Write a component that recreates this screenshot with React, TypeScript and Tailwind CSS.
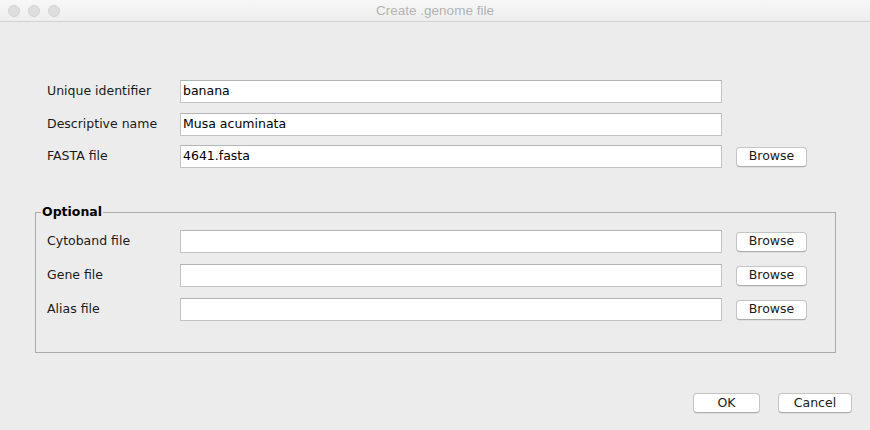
import React from "react";

const font = "font-['DejaVu_Sans',_'Noto_Sans',_sans-serif]";

function Field({ value = "" }: { value?: string }) {
  return (
    <div className="h-[23px] w-[542px] bg-white border border-[#c3c3c3] border-t-[#b4b4b4] flex items-center pl-[2px] text-[12.5px] text-black leading-none">
      {value}
    </div>
  );
}

function Btn({ label, w }: { label: string; w: string }) {
  return (
    <div
      className={`${w} h-[20px] bg-white border border-[#c4c4c4] border-b-[#acacac] rounded-[4px] shadow-[0_0.5px_0.5px_rgba(0,0,0,0.12)] flex items-center justify-center text-[12.5px] text-[#1a1a1a] leading-none`}
    >
      {label}
    </div>
  );
}

function Row({ label, value, browse }: { label: string; value?: string; browse?: boolean }) {
  return (
    <div className="flex items-center h-[23px]">
      <div className="w-[133px] text-[12.5px] text-[#1a1a1a] leading-none">{label}</div>
      <Field value={value} />
      {browse && (
        <div className="ml-[14px]">
          <Btn label="Browse" w="w-[71px]" />
        </div>
      )}
    </div>
  );
}

export default function App() {
  return (
    <div className={`w-[870px] h-[430px] bg-[#ececec] flex flex-col ${font} overflow-hidden`}>
      {/* title bar */}
      <div className="h-[22px] shrink-0 bg-gradient-to-b from-[#f7f7f7] to-[#eeeeee] border-b border-[#d2d2d2] flex items-center">
        <div className="flex items-center gap-[8px] pl-[8px]">
          <div className="w-[12px] h-[12px] rounded-full bg-[#dedede] border border-[#d2d2d2]" />
          <div className="w-[12px] h-[12px] rounded-full bg-[#dedede] border border-[#d2d2d2]" />
          <div className="w-[12px] h-[12px] rounded-full bg-[#dedede] border border-[#d2d2d2]" />
        </div>
        <div className="flex-1 text-center pr-[60px] font-['Liberation_Sans',_Arial,_sans-serif] text-[13.5px] text-[#b3b3b3] leading-none">
          Create .genome file
        </div>
      </div>

      {/* main rows */}
      <div className="flex flex-col pl-[47px] pt-[58px]">
        <Row label="Unique identifier" value="banana" />
        <div className="mt-[10px]">
          <Row label="Descriptive name" value="Musa acuminata" />
        </div>
        <div className="mt-[9px]">
          <Row label="FASTA file" value="4641.fasta" browse />
        </div>
      </div>

      {/* optional group */}
      <fieldset className="ml-[35px] mt-[36px] w-[801px] h-[149px] border border-[#ababab] pl-[11px] pr-0 pt-[10px]">
        <legend className="-ml-[6px] px-[1px] text-[12.5px] font-bold text-black leading-[16px]">
          Optional
        </legend>
        <div className="flex flex-col gap-[11px]">
          <Row label="Cytoband file" browse />
          <Row label="Gene file" browse />
          <Row label="Alias file" browse />
        </div>
      </fieldset>

      {/* bottom buttons */}
      <div className="flex justify-end gap-[18px] pr-[18px] mt-[40px]">
        <Btn label="OK" w="w-[67px]" />
        <Btn label="Cancel" w="w-[74px]" />
      </div>
    </div>
  );
}
